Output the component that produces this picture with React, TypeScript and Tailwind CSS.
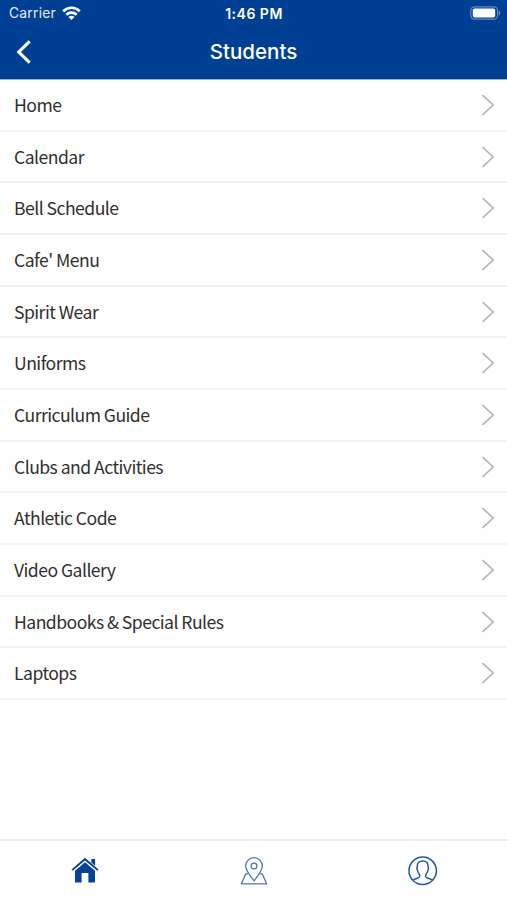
import { useState } from 'react';

interface MenuItem {
  key: string;
  label: string;
}

const menuItems: MenuItem[] = [
  { key: 'home', label: 'Home' },
  { key: 'calendar', label: 'Calendar' },
  { key: 'bell', label: 'Bell Schedule' },
  { key: 'cafe', label: "Cafe' Menu" },
  { key: 'spirit', label: 'Spirit Wear' },
  { key: 'uniforms', label: 'Uniforms' },
  { key: 'curriculum', label: 'Curriculum Guide' },
  { key: 'clubs', label: 'Clubs and Activities' },
  { key: 'athletic', label: 'Athletic Code' },
  { key: 'video', label: 'Video Gallery' },
  { key: 'handbooks', label: 'Handbooks & Special Rules' },
  { key: 'laptops', label: 'Laptops' },
];

function StatusBar() {
  return (
    <div className="grid grid-cols-3 items-center h-[26px] pl-[9px] pr-[6px] leading-none">
      <div className="flex items-center gap-[6px]">
        <span className="pt-[2px] text-[13.8px] tracking-[0.25px] text-white/90">Carrier</span>
        <svg className="w-[19px] h-[14px]" viewBox="0 0 19 14" fill="none" stroke="white" strokeWidth={2.7}>
          <path d="M1.2 5.2C5.9.6 13.1.6 17.8 5.2" />
          <path d="M4.3 8.7c3-2.8 7.4-2.8 10.4 0" />
          <path d="M9.5 14 6.4 11c1.8-1.6 4.4-1.6 6.2 0z" fill="white" stroke="none" />
        </svg>
      </div>
      <span className="pt-[2px] pr-[2px] text-center text-[14px] font-semibold tracking-[0.5px] whitespace-nowrap">1:46 PM</span>
      <svg className="w-[31px] h-[14px] justify-self-end" viewBox="0 0 31 14" fill="none">
        <rect x="0.8" y="0.8" width="26.8" height="12.4" rx="3.8" stroke="white" strokeOpacity={0.4} strokeWidth={1.2} />
        <rect x="2.8" y="2.4" width="22.4" height="9.2" rx="1.8" fill="white" />
        <path d="M28.9 4.8c1.9.8 1.9 3.6 0 4.4z" fill="white" fillOpacity={0.45} />
      </svg>
    </div>
  );
}

function NavBar() {
  return (
    <div className="grid grid-cols-[60px_1fr_60px] items-center h-[52px]">
      <button className="pl-[16px]" aria-label="Back">
        <svg className="w-[16px] h-[25px]" viewBox="0 0 16 25" fill="none" stroke="white" strokeWidth={3.1}>
          <path d="M13.6 1.4 2.8 12l10.8 10.6" />
        </svg>
      </button>
      <h1 className="pt-px text-center text-[20.5px] font-medium">Students</h1>
    </div>
  );
}

function HomeIcon() {
  return (
    <svg className="w-[28px] h-[27px]" viewBox="0 0 28 27" fill="#064297">
      <path d="M14 .8 27.5 12.4l-1.2 1.4L14 3.4 1.7 13.8.5 12.4z" />
      <path d="M14 5.2 24 13.7V25.5h-6.6v-9.4h-6.8v9.4H4V13.7z" />
      <path d="M20.3 2h3.8v6.7l-3.8-3.3z" />
    </svg>
  );
}

function MapIcon() {
  return (
    <svg className="w-[28px] h-[28px]" viewBox="0 0 28 28" fill="none" stroke="#4a76b4" strokeWidth={1.3} strokeLinejoin="round">
      <path d="M14 23.8C11.2 20 5.7 14 5.7 9a8.3 8.3 0 0 1 16.6 0c0 5-5.5 11-8.3 14.8z" />
      <circle cx="14" cy="9" r="2.9" />
      <path d="M8 16.8H5.8L1.3 26.9h25.4l-4.5-10.1H20" />
    </svg>
  );
}

function ProfileIcon() {
  return (
    <svg className="w-[30px] h-[30px]" viewBox="0 0 30 30" fill="none" stroke="#24599f" strokeWidth={1.5}>
      <circle cx="14.7" cy="14.8" r="13.7" />
      <path d="M4.7 24.3c1.1-1.6 5.6-1.6 6.8-3.5.5-.9.2-2-.4-2.8-1-1.2-1.5-2.5-1.6-4-.9-.8-.9-2.2-.2-2.9C8.8 7.1 11.1 5 14.7 5s5.9 2.1 5.4 6.1c.7.7.7 2.1-.2 2.9-.1 1.5-.6 2.8-1.6 4-.6.8-.9 1.9-.4 2.8 1.2 1.9 5.7 1.9 6.8 3.5" />
    </svg>
  );
}

const tabs = [
  { key: 'home', label: 'Home', Icon: HomeIcon },
  { key: 'map', label: 'Map', Icon: MapIcon },
  { key: 'profile', label: 'Profile', Icon: ProfileIcon },
];

export default function App() {
  const [activeTab, setActiveTab] = useState('home');

  return (
    <div className="flex flex-col h-screen bg-[#fefefe] font-['Inter',sans-serif]">
      <header className="h-[80px] shrink-0 bg-[#004094] text-white border-b border-[#8fbbe3]">
        <StatusBar />
        <NavBar />
      </header>

      {/* Menu list */}
      <ul className="flex-1 font-['Noto_Sans_CJK_SC',sans-serif]">
        {menuItems.map((item) => (
          <li
            key={item.key}
            className="flex items-center justify-between h-[51.68px] pl-[14px] pr-[12px] border-b-2 border-[#f2f2f3]"
          >
            <span className="text-[17.6px] leading-none tracking-[-0.54px] text-[#303030]">{item.label}</span>
            <svg className="w-[14px] h-[22px]" viewBox="0 0 14 22" fill="none" stroke="#b0b5b9" strokeWidth={1.6}>
              <path d="M1.5 1.2 12.2 11 1.5 20.8" />
            </svg>
          </li>
        ))}
      </ul>

      {/* Tab bar */}
      <nav className="grid grid-cols-3 h-[61px] shrink-0 border-t-2 border-[#eeeeef]">
        {tabs.map(({ key, label, Icon }) => (
          <button
            key={key}
            aria-label={label}
            aria-current={activeTab === key}
            onClick={() => setActiveTab(key)}
            className="flex items-center justify-center"
          >
            <Icon />
          </button>
        ))}
      </nav>
    </div>
  );
}
